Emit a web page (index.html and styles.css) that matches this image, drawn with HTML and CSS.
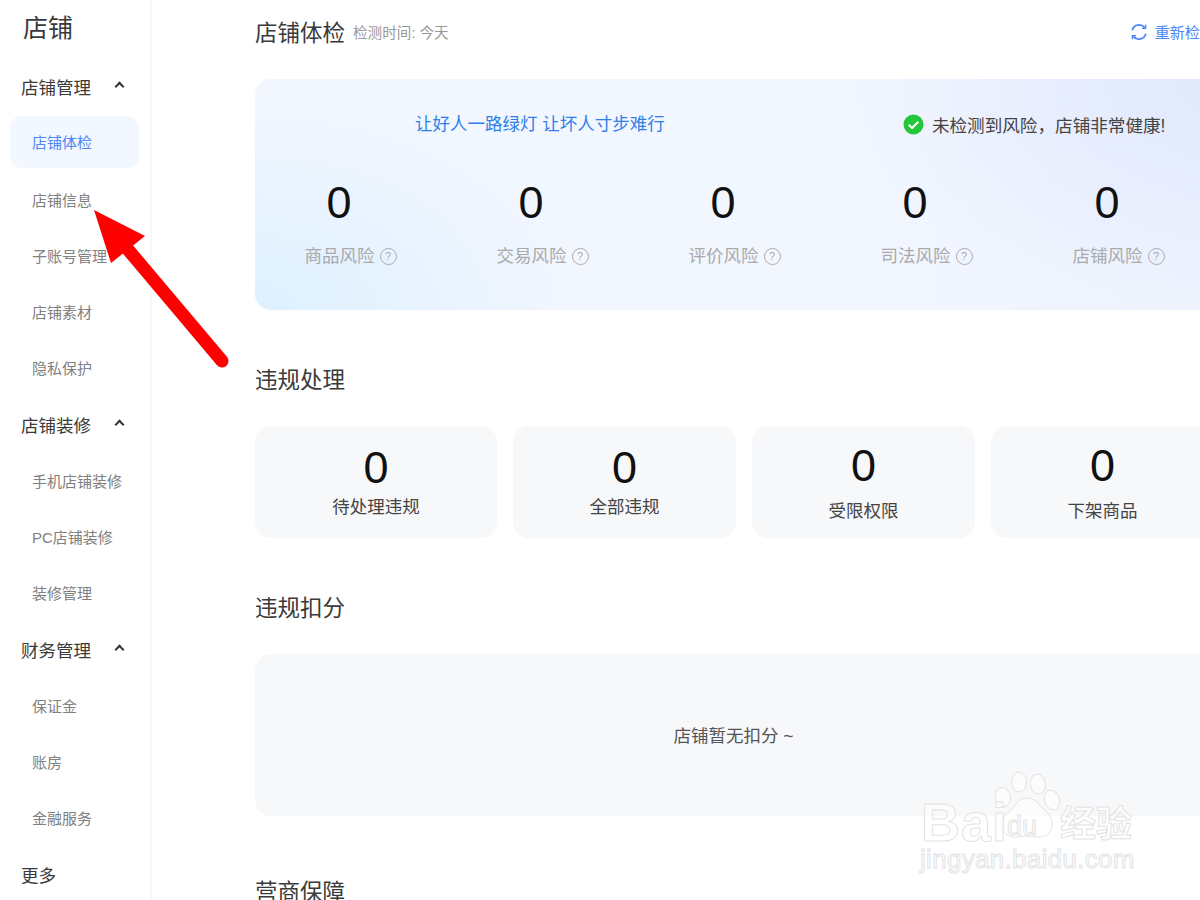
FILE: index.html
```html
<!DOCTYPE html>
<html lang="en">
<head>
  <meta charset="UTF-8">
  <title>店铺体检</title>
  <link rel="stylesheet" href="styles.css">
</head>
<body>
  <div class="page">
    <!-- left menu -->
    <aside class="sidebar">
      <h1 class="side-title">店铺</h1>
      <div class="side-row group">店铺管理 <span class="chev"></span></div>
      <a class="side-row item active">店铺体检</a>
      <a class="side-row item">店铺信息</a>
      <a class="side-row item">子账号管理</a>
      <a class="side-row item">店铺素材</a>
      <a class="side-row item">隐私保护</a>
      <div class="side-row group">店铺装修 <span class="chev"></span></div>
      <a class="side-row item">手机店铺装修</a>
      <a class="side-row item">PC店铺装修</a>
      <a class="side-row item">装修管理</a>
      <div class="side-row group">财务管理 <span class="chev"></span></div>
      <a class="side-row item">保证金</a>
      <a class="side-row item">账房</a>
      <a class="side-row item">金融服务</a>
      <div class="side-row group">更多</div>
    </aside>

    <main class="content">
      <div class="head">
        <h2 class="sec-title">店铺体检</h2>
        <span class="check-time">检测时间: 今天</span>
        <a class="recheck">
          <svg class="recheck-icon" viewBox="0 0 18 18" fill="none" stroke="#4d86f7" stroke-width="1.8">
            <path d="M2.2 7.4A7 7 0 0 1 14.6 4.6"/>
            <path d="M15.8 10.6A7 7 0 0 1 3.4 13.4"/>
            <path d="M15.6 1.8v3.6h-3.6" stroke-width="1.4"/>
            <path d="M2.4 16.2v-3.6h3.6" stroke-width="1.4"/>
          </svg>
          重新检测
        </a>
      </div>

      <section class="hero">
        <div class="hero-top">
          <span class="slogan">让好人一路绿灯 让坏人寸步难行</span>
          <span class="health">
            <svg class="ok-icon" viewBox="0 0 22 22">
              <circle cx="11" cy="11" r="10.5" fill="#24c73c"/>
              <path d="M6 11.3l3.4 3.3L16 8" fill="none" stroke="#fff" stroke-width="2.2"/>
            </svg>
            未检测到风险，店铺非常健康!
          </span>
        </div>
        <div class="metrics">
          <div class="metric"><div class="num">0</div><div class="metric-label">商品风险 <span class="tip">?</span></div></div>
          <div class="metric"><div class="num">0</div><div class="metric-label">交易风险 <span class="tip">?</span></div></div>
          <div class="metric"><div class="num">0</div><div class="metric-label">评价风险 <span class="tip">?</span></div></div>
          <div class="metric"><div class="num">0</div><div class="metric-label">司法风险 <span class="tip">?</span></div></div>
          <div class="metric"><div class="num">0</div><div class="metric-label">店铺风险 <span class="tip">?</span></div></div>
        </div>
      </section>

      <h2 class="sec-title violation-title">违规处理</h2>
      <div class="cards">
        <div class="card wide"><div class="num">0</div><div class="card-label">待处理违规</div></div>
        <div class="card"><div class="num">0</div><div class="card-label">全部违规</div></div>
        <div class="card alt"><div class="num">0</div><div class="card-label">受限权限</div></div>
        <div class="card alt"><div class="num">0</div><div class="card-label">下架商品</div></div>
      </div>

      <h2 class="sec-title deduct-title">违规扣分</h2>
      <div class="empty">店铺暂无扣分 ~</div>

      <h2 class="sec-title guard-title">营商保障</h2>
    </main>
  </div>

  <!-- red arrow added over the screenshot -->
  <svg class="arrow" viewBox="0 0 240 380">
    <path d="M222 361L125 246" stroke="#ff0000" stroke-width="13" stroke-linecap="round" fill="none"/>
    <path d="M94 210L145 236L111 263Z" fill="#ff0000"/>
  </svg>

  <!-- watermark -->
  <div class="watermark">
    <svg class="paw" viewBox="0 0 70 72" fill="#fff" fill-opacity="0.6" stroke="#e2e3e5" stroke-width="1">
      <ellipse cx="9" cy="26" rx="7.5" ry="9.5" transform="rotate(-15 9 26)"/>
      <ellipse cx="25" cy="11" rx="7.5" ry="10"/>
      <ellipse cx="44" cy="13" rx="7.5" ry="10" transform="rotate(-10 44 13)"/>
      <ellipse cx="58" cy="29" rx="7.5" ry="10" transform="rotate(-20 58 29)"/>
      <path d="M33 27c9 0 12 7 18 13 6 5 8 9 7 16-2 9-10 11-16 10-6 0-11-2-18 0-7 1-14-2-16-9-1-7 2-12 7-16 7-5 8-14 18-14z"/>
    </svg>
    <span class="wm-bai">Bai</span>
    <span class="wm-du">du</span>
    <span class="wm-cn">经验</span>
    <span class="wm-url">jingyan.baidu.com</span>
  </div>
</body>
</html>
```

FILE: styles.css
```css
html, body {
  margin: 0;
  padding: 0;
  height: 100%;
}
body {
  position: relative;
  width: 1200px;
  height: 900px;
  overflow: hidden;
  background: #fff;
  font-family: "Liberation Sans", "Noto Sans CJK SC", sans-serif;
  color: #333;
}

.page {
  display: flex;
  height: 900px;
}

/* Sidebar */
.sidebar {
  display: flex;
  flex-direction: column;
  flex: 0 0 152px;
  height: 900px;
  box-sizing: border-box;
  border-right: 2px solid #f6f7f9;
  padding: 0 11px 0 10px;
}
.side-title {
  flex: none;
  margin: 0;
  height: 58.4px;
  padding: 11px 0 0 13px;
  box-sizing: border-box;
  font-size: 25px;
  line-height: 34px;
  font-weight: 400;
  color: #3a3a3a;
}
.side-row {
  display: flex;
  flex: none;
  align-items: center;
  box-sizing: border-box;
  height: 52.25px;
  margin: 2px 0;
}
.group {
  padding-left: 11px;
  font-size: 17.5px;
  color: #3a3a3a;
}
.item {
  padding-left: 22px;
  font-size: 15px;
  color: #808080;
  white-space: nowrap;
  border-radius: 12px;
}
.item.active {
  margin: 1px 0 3px;
  background: #f3f7ff;
  color: #4d86f7;
}
.chev {
  width: 5px;
  height: 5px;
  margin: 0 0 0 25px;
  border-left: 2px solid #333;
  border-top: 2px solid #333;
  transform: rotate(45deg);
}

/* Main column, runs off the right edge of the window */
.content {
  flex: 0 0 1000px;
  margin-left: 103px;
}
.sec-title {
  margin: 0;
  font-size: 22.5px;
  line-height: 32px;
  font-weight: 400;
  color: #3a3a3a;
}
.head {
  display: flex;
  align-items: center;
  height: 32px;
  padding-top: 16px;
}
.head .sec-title {
  padding-top: 3px;
}
.check-time {
  margin-left: 8px;
  font-size: 14.6px;
  color: #999;
  margin-bottom: 1px;
}
.recheck {
  display: flex;
  align-items: center;
  gap: 7px;
  margin-left: 681px;
  margin-bottom: 1px;
  font-size: 15px;
  color: #4d86f7;
  white-space: nowrap;
}
.recheck-icon {
  width: 18px;
  height: 18px;
}

/* Health check banner */
.hero {
  height: 231px;
  margin-top: 31px;
  border-radius: 16px 0 0 16px;
  background:
    radial-gradient(ellipse 320px 200px at 0 100%, #ddf0ff 0%, rgba(221,240,255,0) 100%),
    radial-gradient(ellipse 420px 230px at 100% 0, #dfe8fc 0%, rgba(223,232,252,0) 100%),
    linear-gradient(90deg, #f1f6ff 0%, #f2f6ff 60%, #edf2fe 100%);
}
.hero-top {
  display: flex;
  align-items: center;
  height: 88px;
}
.slogan {
  margin: 0 0 2px 160px;
  font-size: 17.5px;
  color: #2f7fe8;
  white-space: nowrap;
}
.health {
  display: flex;
  align-items: center;
  gap: 8px;
  margin: 3px 0 0 238px;
  font-size: 17.6px;
  color: #444;
  white-space: nowrap;
}
.ok-icon {
  width: 21px;
  height: 21px;
}
.metrics {
  display: flex;
  gap: 24px;
  padding-top: 10px;
}
.metric {
  flex: 0 0 168px;
  text-align: center;
}
.num {
  font-size: 45px;
  line-height: 52px;
  color: #111;
}
.metric-label {
  display: flex;
  align-items: center;
  justify-content: center;
  gap: 5px;
  margin-top: 15px;
  padding-left: 23px;
  font-size: 17.5px;
  line-height: 24px;
  color: #aaa;
  white-space: nowrap;
}
.tip {
  box-sizing: border-box;
  width: 17px;
  height: 17px;
  border: 1.4px solid #aaa;
  border-radius: 50%;
  font-size: 11px;
  line-height: 14px;
  text-align: center;
}

/* Violations */
.violation-title {
  margin-top: 55px;
}
.cards {
  display: flex;
  gap: 16px;
  margin-top: 29px;
}
.card {
  flex: 0 0 223px;
  height: 112px;
  box-sizing: border-box;
  padding-top: 16px;
  border-radius: 16px;
  background: #f7f8fa;
  text-align: center;
}
.card.wide {
  flex-basis: 242px;
}
.card.alt {
  padding-top: 14px;
}
.card-label {
  margin-top: 1px;
  font-size: 17.5px;
  line-height: 24px;
  color: #444;
}
.card.alt .card-label {
  margin-top: 7px;
}

/* Deductions */
.deduct-title {
  margin-top: 55px;
}
.empty {
  display: flex;
  align-items: center;
  justify-content: center;
  height: 162px;
  margin-top: 29px;
  padding: 0 43px 2px 0;
  box-sizing: border-box;
  border-radius: 16px 0 0 16px;
  background: #f7f8fa;
  font-size: 17.5px;
  color: #555;
}
.guard-title {
  margin-top: 61px;
}

/* Overlays */
.arrow {
  position: absolute;
  left: 0;
  top: 0;
  width: 240px;
  height: 380px;
}
.watermark {
  position: absolute;
  left: 918px;
  top: 770px;
  width: 240px;
  height: 110px;
}
.paw {
  position: absolute;
  left: 76px;
  top: 1px;
  width: 70px;
  height: 72px;
}
.watermark span {
  position: absolute;
  color: rgba(255,255,255,0.6);
  -webkit-text-stroke: 1px #e2e3e5;
  white-space: nowrap;
}
.wm-bai {
  left: 3px;
  top: 31px;
  font-size: 54px;
  line-height: 42px;
  font-weight: 700;
  letter-spacing: 1px;
}
.wm-du {
  left: 89px;
  top: 41px;
  font-size: 27px;
  line-height: 30px;
}
.wm-cn {
  left: 142px;
  top: 37px;
  font-size: 36px;
  line-height: 36px;
  font-weight: 700;
}
.wm-url {
  left: 2px;
  top: 73px;
  font-size: 26px;
  line-height: 32px;
  letter-spacing: 0.3px;
}
```
